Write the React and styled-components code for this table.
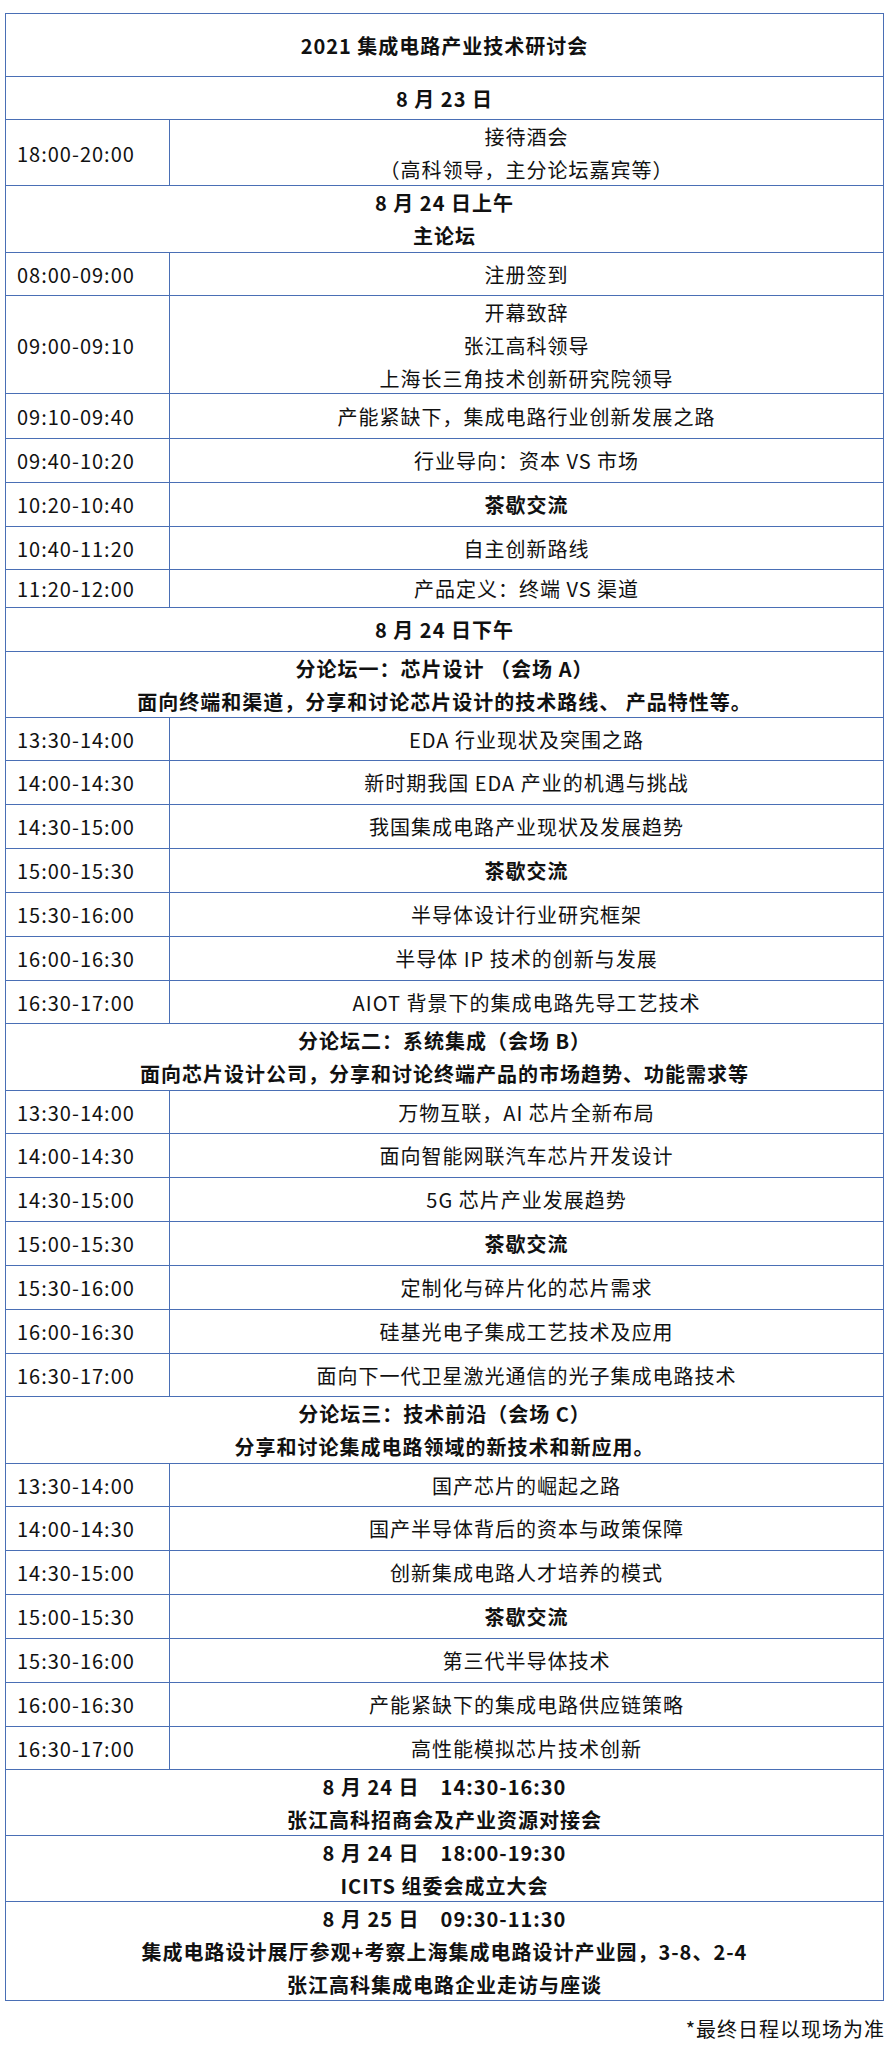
import React from 'react';
import styled, { createGlobalStyle } from 'styled-components';

const GlobalStyle = createGlobalStyle`
  body {
    margin: 0;
    background: #ffffff;
    font-family: 'Noto Sans CJK SC', 'Noto Sans', sans-serif;
    color: #111111;
  }
`;

const Page = styled.div`
  width: 889px;
  padding: 13px 0 0 5px;
  box-sizing: border-box;
`;

const Schedule = styled.div`
  width: 879px;
  border: 1px solid #4a6fb5;
  border-bottom: none;
  box-sizing: border-box;
`;

const Row = styled.div`
  display: grid;
  grid-template-columns: ${(p) => (p.$split ? '164px 1fr' : '1fr')};
  height: ${(p) => p.$h}px;
  border-bottom: 1px solid #4a6fb5;
  box-sizing: border-box;
`;

const TimeCell = styled.div`
  display: flex;
  align-items: center;
  padding-left: 11px;
  border-right: 1px solid #4a6fb5;
  font-size: 20px;
  letter-spacing: 1px;
  white-space: nowrap;
`;

const Content = styled.div`
  display: flex;
  flex-direction: column;
  align-items: center;
  justify-content: center;
  font-size: 20px;
  line-height: 33px;
  letter-spacing: 1px;
  font-weight: ${(p) => (p.$bold ? 700 : 400)};
  white-space: pre;
  text-align: center;
`;

const Note = styled.div`
  width: 880px;
  margin-top: 11px;
  text-align: right;
  font-size: 20px;
  line-height: 33px;
  letter-spacing: 1px;
`;

const title = { h: 63, lines: ['2021 集成电路产业技术研讨会'], bold: true };

const rows = [
  title,
  { h: 43, lines: ['8 月 23 日'], bold: true },
  { h: 66, time: '18:00-20:00', lines: ['接待酒会', '（高科领导，主分论坛嘉宾等）'] },
  { h: 67, lines: ['8 月 24 日上午', '主论坛'], bold: true },
  { h: 43, time: '08:00-09:00', lines: ['注册签到'] },
  { h: 98, time: '09:00-09:10', lines: ['开幕致辞', '张江高科领导', '上海长三角技术创新研究院领导'] },
  { h: 45, time: '09:10-09:40', lines: ['产能紧缺下，集成电路行业创新发展之路'] },
  { h: 44, time: '09:40-10:20', lines: ['行业导向：资本 VS 市场'] },
  { h: 44, time: '10:20-10:40', lines: ['茶歇交流'], bold: true },
  { h: 43, time: '10:40-11:20', lines: ['自主创新路线'] },
  { h: 38, time: '11:20-12:00', lines: ['产品定义：终端 VS 渠道'] },
  { h: 44, lines: ['8 月 24 日下午'], bold: true },
  { h: 66, lines: ['分论坛一：芯片设计 （会场 A）', '面向终端和渠道，分享和讨论芯片设计的技术路线、 产品特性等。'], bold: true },
];

const sessions = [
  {
    head: ['分论坛二：系统集成（会场 B）', '面向芯片设计公司，分享和讨论终端产品的市场趋势、功能需求等'],
  },
];

const talksA = [
  'EDA 行业现状及突围之路',
  '新时期我国 EDA 产业的机遇与挑战',
  '我国集成电路产业现状及发展趋势',
  '茶歇交流',
  '半导体设计行业研究框架',
  '半导体 IP 技术的创新与发展',
  'AIOT 背景下的集成电路先导工艺技术',
];
const talksB = [
  '万物互联，AI 芯片全新布局',
  '面向智能网联汽车芯片开发设计',
  '5G 芯片产业发展趋势',
  '茶歇交流',
  '定制化与碎片化的芯片需求',
  '硅基光电子集成工艺技术及应用',
  '面向下一代卫星激光通信的光子集成电路技术',
];
const talksC = [
  '国产芯片的崛起之路',
  '国产半导体背后的资本与政策保障',
  '创新集成电路人才培养的模式',
  '茶歇交流',
  '第三代半导体技术',
  '产能紧缺下的集成电路供应链策略',
  '高性能模拟芯片技术创新',
];

const slots = ['13:30-14:00', '14:00-14:30', '14:30-15:00', '15:00-15:30', '15:30-16:00', '16:00-16:30', '16:30-17:00'];
const slotHeights = [43, 44, 44, 44, 44, 44, 43];

const sessionRows = (talks) =>
  talks.map((t, i) => ({ h: slotHeights[i], time: slots[i], lines: [t], bold: t === '茶歇交流' }));

const allRows = [
  ...rows,
  ...sessionRows(talksA),
  { h: 67, lines: sessions[0].head, bold: true },
  ...sessionRows(talksB),
  { h: 67, lines: ['分论坛三：技术前沿（会场 C）', '分享和讨论集成电路领域的新技术和新应用。'], bold: true },
  ...sessionRows(talksC),
  { h: 66, lines: ['8 月 24 日　14:30-16:30', '张江高科招商会及产业资源对接会'], bold: true },
  { h: 66, lines: ['8 月 24 日　18:00-19:30', 'ICITS 组委会成立大会'], bold: true },
  {
    h: 99,
    lines: ['8 月 25 日　09:30-11:30', '集成电路设计展厅参观+考察上海集成电路设计产业园，3-8、2-4', '张江高科集成电路企业走访与座谈'],
    bold: true,
  },
];

export default function App() {
  return (
    <Page>
      <GlobalStyle />
      <Schedule>
        {allRows.map((r, i) => (
          <Row key={i} $h={r.h} $split={!!r.time}>
            {r.time && <TimeCell>{r.time}</TimeCell>}
            <Content $bold={r.bold}>
              {r.lines.map((l, j) => (
                <span key={j}>{l}</span>
              ))}
            </Content>
          </Row>
        ))}
      </Schedule>
      <Note>*最终日程以现场为准</Note>
    </Page>
  );
}
